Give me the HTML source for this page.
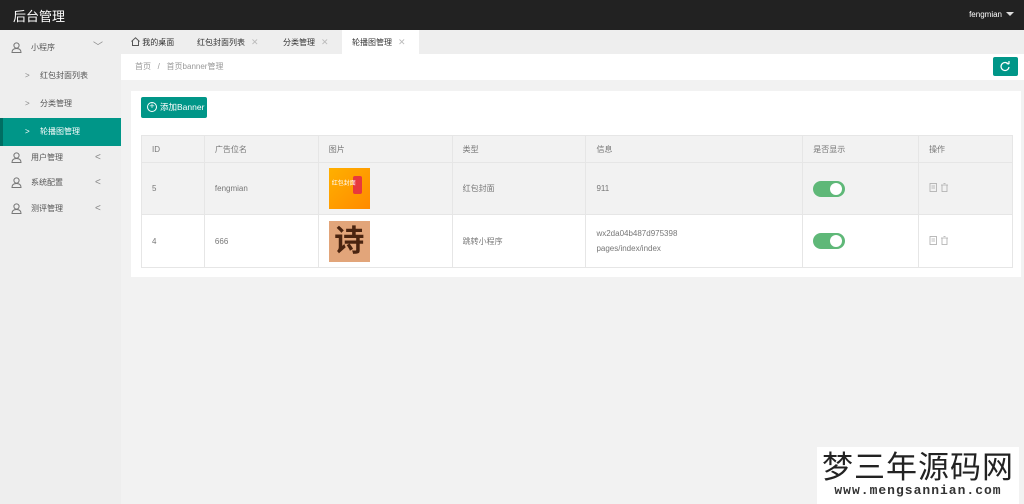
<!DOCTYPE html>
<html><head><meta charset="utf-8"><style>
*{margin:0;padding:0;box-sizing:border-box}
body{width:1024px;height:504px;overflow:hidden;background:#f2f2f2;font-family:"Liberation Sans","Noto Sans CJK SC",sans-serif;font-size:8px;color:#666;position:relative}
.hd{position:absolute;left:0;top:0;width:1024px;height:30px;background:#222}
.logo{position:absolute;left:13px;top:6px;color:#fff;font-size:13px}
.user{position:absolute;right:10px;top:10px;color:#fff;font-size:8px}
.user:after{content:"";display:inline-block;margin-left:4px;border:4px solid transparent;border-top-color:#ddd;border-bottom:0;vertical-align:1px}
.sb{position:absolute;left:0;top:30px;width:121px;height:474px;background:#eeeeee}
.it{position:absolute;left:0;width:121px;height:26px;line-height:26px;color:#555;font-size:8px}
.it svg{position:absolute;left:11px;top:7px}
.it .t{position:absolute;left:31px}
.it .a{position:absolute;left:95px;color:#888;font-size:10px}
.sub .t{left:40px}.sub .g{position:absolute;left:25px;color:#888}
.act{background:#009688;color:#fff}.act .g{color:#fff}
.act:before{content:"";position:absolute;left:0;top:0;width:3px;height:100%;background:#006e63}
.tabs{position:absolute;left:121px;top:30px;width:903px;height:24px;background:#eee}
.tab{position:absolute;top:0;height:24px;line-height:25px;font-size:8px;color:#333}
.tab .x{color:#bbb;margin-left:6px;font-size:9px}
.bc{position:absolute;left:121px;top:54px;width:903px;height:26px;background:#fff;line-height:26px;padding-left:14px;color:#999;font-size:8px}
.rf{position:absolute;left:993px;top:57px;width:25px;height:19px;background:#009688;border-radius:2px}
.card{position:absolute;left:131px;top:91px;width:890px;height:186px;background:#fff}
.btn{position:absolute;left:141px;top:97px;width:66px;height:21px;background:#009688;color:#fff;font-size:8.5px;line-height:21px;padding-left:19px;border-radius:2px}
.btn i{position:absolute;left:6px;top:5px;width:10px;height:10px;border:1px solid #fff;border-radius:50%;font-style:normal;font-size:9px;line-height:7px;text-align:center}
table{position:absolute;left:141px;top:135px;width:872px;border-collapse:collapse;font-size:8px;color:#777}
td{border:1px solid #e6e6e6;padding-left:10px}
tr.h td{height:27px;background:#f2f2f2}
tr.r1 td{height:52px;background:#f2f2f2}
tr.r2 td{height:53px;background:#fff}
.sw{display:inline-block;width:32px;height:16px;border-radius:8px;background:#5fb878;position:relative;vertical-align:middle}
.sw:after{content:"";position:absolute;right:3px;top:2px;width:12px;height:12px;border-radius:50%;background:#fff}
.wm{position:absolute;left:817px;top:447px;width:202px;height:57px;background:#fff;text-align:center}
</style></head><body>
<div class="hd"><div class="logo">后台管理</div><div class="user">fengmian</div></div>
<div class="sb">
<div class="it" style="top:5px"><svg width="11" height="11" viewBox="0 0 11 11" fill="none" stroke="#777" stroke-width="1"><circle cx="5.5" cy="3.5" r="2.6"/><path d="M1 10.5c0-3 2-4 4.5-4s4.5 1 4.5 4z"/></svg><span class="t">小程序</span><span class="a" style="left:93px">﹀</span></div>
<div class="it sub" style="top:33px"><span class="g">&gt;</span><span class="t">红包封面列表</span></div>
<div class="it sub" style="top:61px"><span class="g">&gt;</span><span class="t">分类管理</span></div>
<div class="it sub act" style="top:88px;height:28px;line-height:28px"><span class="g">&gt;</span><span class="t">轮播图管理</span></div>
<div class="it" style="top:115px"><svg width="11" height="11" viewBox="0 0 11 11" fill="none" stroke="#777"><circle cx="5.5" cy="3.5" r="2.6"/><path d="M1 10.5c0-3 2-4 4.5-4s4.5 1 4.5 4z"/></svg><span class="t">用户管理</span><span class="a">&lt;</span></div>
<div class="it" style="top:140px"><svg width="11" height="11" viewBox="0 0 11 11" fill="none" stroke="#777"><circle cx="5.5" cy="3.5" r="2.6"/><path d="M1 10.5c0-3 2-4 4.5-4s4.5 1 4.5 4z"/></svg><span class="t">系统配置</span><span class="a">&lt;</span></div>
<div class="it" style="top:166px"><svg width="11" height="11" viewBox="0 0 11 11" fill="none" stroke="#777"><circle cx="5.5" cy="3.5" r="2.6"/><path d="M1 10.5c0-3 2-4 4.5-4s4.5 1 4.5 4z"/></svg><span class="t">测评管理</span><span class="a">&lt;</span></div>
</div>
<div class="tabs">
<div class="tab" style="left:10px"><svg width="9" height="9" viewBox="0 0 9 9" fill="none" stroke="#555" style="vertical-align:-1px"><path d="M0.5 4.5L4.5 0.8 8.5 4.5M1.5 3.8V8.5h6V3.8"/></svg> 我的桌面</div>
<div class="tab" style="left:76px">红包封面列表<span class="x">✕</span></div>
<div class="tab" style="left:162px">分类管理<span class="x">✕</span></div>
<div class="tab" style="left:221px;width:77px;background:#fff;padding-left:10px">轮播图管理<span class="x">✕</span></div>
</div>
<div class="bc">首页 &nbsp; / &nbsp; 首页banner管理</div>
<div class="rf"><svg width="25" height="19" viewBox="0 0 25 19" fill="none" stroke="#fff" stroke-width="1.2"><path d="M15.5 7.5A4 4 0 1 0 16 10"/><path d="M13.5 6.5h2.5V4"/></svg></div>
<div class="card"></div>
<div class="btn"><i>+</i>添加Banner</div>
<table>
<colgroup><col style="width:63px"><col style="width:114px"><col style="width:134px"><col style="width:134px"><col style="width:217px"><col style="width:116px"><col style="width:94px"></colgroup>
<tr class="h"><td>ID</td><td>广告位名</td><td>图片</td><td>类型</td><td>信息</td><td>是否显示</td><td>操作</td></tr>
<tr class="r1"><td>5</td><td>fengmian</td><td><div style="width:41px;height:41px;background:linear-gradient(135deg,#ffb000,#ff8a00);position:relative"><div style="position:absolute;left:24px;top:8px;width:9px;height:18px;background:#e8383d;border-radius:2px"></div><div style="position:absolute;left:3px;top:10px;color:#fff;font-size:6px">红包封面</div></div></td><td>红包封面</td><td>911</td><td><span class="sw"></span></td><td><svg width="22" height="9" viewBox="0 0 22 9" fill="none" stroke="#aaa" stroke-width="0.8"><rect x="1" y="0.5" width="6.5" height="8"/><path d="M2.5 3h3.5M2.5 5h3.5"/><path d="M12 2h7M13 2v6.5h5V2M14.5 0.5h2"/></svg></td></tr>
<tr class="r2"><td>4</td><td>666</td><td><div style="width:41px;height:41px;background:#e2a57a;color:#4a2410;font-size:30px;line-height:41px;text-align:center;font-weight:bold">诗</div></td><td>跳转小程序</td><td style="line-height:15px">wx2da04b487d975398<br>pages/index/index</td><td><span class="sw"></span></td><td><svg width="22" height="9" viewBox="0 0 22 9" fill="none" stroke="#aaa" stroke-width="0.8"><rect x="1" y="0.5" width="6.5" height="8"/><path d="M2.5 3h3.5M2.5 5h3.5"/><path d="M12 2h7M13 2v6.5h5V2M14.5 0.5h2"/></svg></td></tr>
</table>
<div class="wm"><div style="font-size:31px;color:#222;line-height:36px;letter-spacing:1px;font-family:'Noto Sans CJK SC',sans-serif">梦三年源码网</div><div style="font-family:'Liberation Mono',monospace;font-size:13px;font-weight:bold;color:#333;line-height:16px;letter-spacing:1px">www.mengsannian.com</div></div>
</body></html>
